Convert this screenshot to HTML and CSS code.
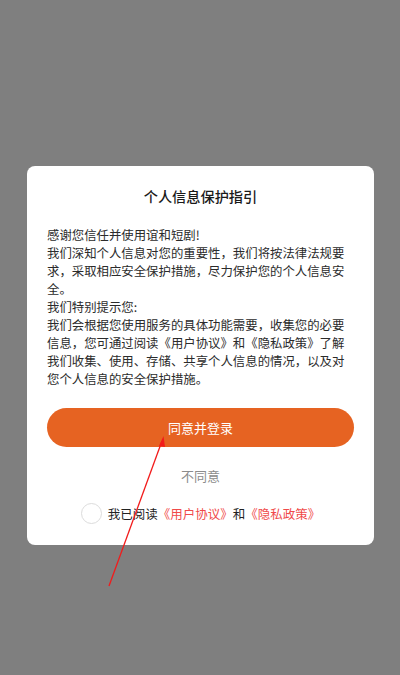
FILE: index.html
```html
<!DOCTYPE html>
<html lang="zh-CN">
<head>
    <meta charset="UTF-8">
    <meta name="viewport" content="width=device-width, initial-scale=1.0">
    <title>个人信息保护指引</title>
    <link rel="stylesheet" href="styles.css">
</head>
<body>
    <div class="mask">
        <div class="dialog">
            <h1>个人信息保护指引</h1>
            <div class="content">
                <p>感谢您信任并使用谊和短剧!</p>
                <p>我们深知个人信息对您的重要性，我们将按法律法规要求，采取相应安全保护措施，尽力保护您的个人信息安全。</p>
                <p>我们特别提示您:</p>
                <p>我们会根据您使用服务的具体功能需要，收集您的必要信息，您可通过阅读《用户协议》和《隐私政策》了解我们收集、使用、存储、共享个人信息的情况，以及对您个人信息的安全保护措施。</p>
            </div>
            <button class="agree">同意并登录</button>
            <div class="disagree">不同意</div>
            <div class="check-row">
                <span class="check"></span>
                <span class="check-text">我已阅读<a class="link">《用户协议》</a>和<a class="link">《隐私政策》</a></span>
            </div>
        </div>
    </div>

    <!-- annotation arrow -->
    <svg class="arrow" width="400" height="675" viewBox="0 0 400 675">
        <line x1="109" y1="586" x2="162" y2="441" stroke="#f21b1b" stroke-width="1.3"/>
        <polygon points="163.5,436 159,446 165,447" fill="#f21b1b"/>
    </svg>
</body>
</html>
```

FILE: styles.css
```css
body {
    margin: 0;
    padding: 0;
    background-color: #7f7f7f;
    font-family: "Noto Sans CJK SC", "Noto Sans", sans-serif;
}
.mask {
    width: 400px;
    height: 675px;
    padding-top: 166px;
    box-sizing: border-box;
}
.dialog {
    width: 347px;
    margin-left: 27px;
    box-sizing: border-box;
    padding: 20px 20px 22px;
    background: #fff;
    border-radius: 8px;
}
h1 {
    margin: 0;
    font-size: 14.2px;
    line-height: 20px;
    font-weight: 500;
    color: #1a1a1a;
    text-align: center;
}
.content {
    margin-top: 20px;
    font-size: 12.4px;
    line-height: 18px;
    color: #2b2b2b;
}
.content p {
    margin: 0;
}
.agree {
    display: block;
    width: 100%;
    height: 39px;
    margin-top: 20px;
    border: none;
    border-radius: 20px;
    background-color: #e66322;
    color: #fff;
    font-family: inherit;
    font-size: 13px;
    padding: 0;
}
.disagree {
    margin-top: 19px;
    line-height: 20px;
    font-size: 13px;
    color: #8c8c8c;
    text-align: center;
}
.check-row {
    margin-top: 17px;
    display: flex;
    align-items: center;
    justify-content: center;
    gap: 6px;
    height: 20px;
}
.check {
    width: 19px;
    height: 19px;
    border: 1px solid #dcdcdc;
    border-radius: 50%;
}
.check-text {
    font-size: 12.5px;
    color: #222;
}
.link {
    color: #f04a4a;
}
.arrow {
    position: absolute;
    left: 0;
    top: 0;
    pointer-events: none;
}
```
